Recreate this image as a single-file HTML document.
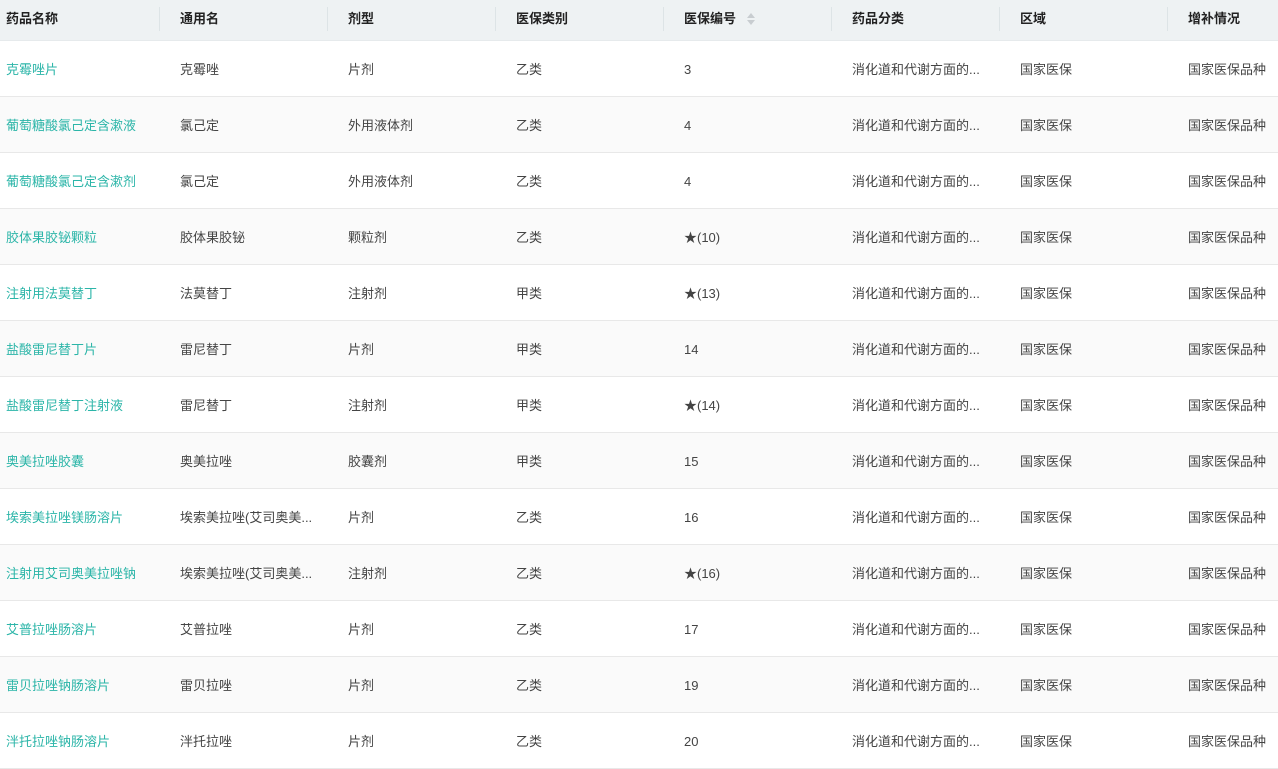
<!DOCTYPE html>
<html><head><meta charset="utf-8"><style>
*{margin:0;padding:0;box-sizing:border-box}
body{width:1278px;height:756px;overflow:hidden;background:#fff;font-family:"Liberation Sans","Noto Sans CJK SC",sans-serif;font-size:13px;color:#333;line-height:18px}
.hd{position:absolute;left:0;top:0;width:1278px;height:41px;background:#eef2f3;border-bottom:1px solid #e6eaec}
.c{position:absolute;white-space:nowrap;height:18px;line-height:18px}
.h{font-weight:bold;color:#222;top:10px}
.sep{position:absolute;top:7px;width:1px;height:24px;background:#dde4e6}
.row{position:absolute;left:0;width:1278px;height:56px;border-bottom:1px solid #e8e8e8}
.row .c{top:20px;color:#444}
.row .l{color:#2bb5a8}
</style></head><body>
<div class="hd">
<span class="c h" style="left:6px">药品名称</span>
<span class="c h" style="left:180px">通用名</span>
<span class="c h" style="left:348px">剂型</span>
<span class="c h" style="left:516px">医保类别</span>
<span class="c h" style="left:684px">医保编号</span>
<svg style="position:absolute;left:746px;top:12px" width="10" height="14"><path d="M1 6 L5 1 L9 6Z M1 8 L5 13 L9 8Z" fill="#c8cdd0"/></svg>
<span class="c h" style="left:852px">药品分类</span>
<span class="c h" style="left:1020px">区域</span>
<span class="c h" style="left:1188px">增补情况</span>
<div class="sep" style="left:159px"></div><div class="sep" style="left:327px"></div><div class="sep" style="left:495px"></div><div class="sep" style="left:663px"></div><div class="sep" style="left:831px"></div><div class="sep" style="left:999px"></div><div class="sep" style="left:1167px"></div>
</div>
<div id="rows"></div>
<script>
var d=[["克霉唑片","克霉唑","片剂","乙类","3"],["葡萄糖酸氯己定含漱液","氯己定","外用液体剂","乙类","4"],["葡萄糖酸氯己定含漱剂","氯己定","外用液体剂","乙类","4"],["胶体果胶铋颗粒","胶体果胶铋","颗粒剂","乙类","★(10)"],["注射用法莫替丁","法莫替丁","注射剂","甲类","★(13)"],["盐酸雷尼替丁片","雷尼替丁","片剂","甲类","14"],["盐酸雷尼替丁注射液","雷尼替丁","注射剂","甲类","★(14)"],["奥美拉唑胶囊","奥美拉唑","胶囊剂","甲类","15"],["埃索美拉唑镁肠溶片","埃索美拉唑(艾司奥美...","片剂","乙类","16"],["注射用艾司奥美拉唑钠","埃索美拉唑(艾司奥美...","注射剂","乙类","★(16)"],["艾普拉唑肠溶片","艾普拉唑","片剂","乙类","17"],["雷贝拉唑钠肠溶片","雷贝拉唑","片剂","乙类","19"],["泮托拉唑钠肠溶片","泮托拉唑","片剂","乙类","20"]];
var h="";d.forEach(function(r,i){h+='<div class="row" style="top:'+(41+56*i)+'px;background:'+(i%2?'#fafafa':'#fff')+'"><span class="c l" style="left:6px">'+r[0]+'</span><span class="c" style="left:180px">'+r[1]+'</span><span class="c" style="left:348px">'+r[2]+'</span><span class="c" style="left:516px">'+r[3]+'</span><span class="c" style="left:684px">'+r[4]+'</span><span class="c" style="left:852px">消化道和代谢方面的...</span><span class="c" style="left:1020px">国家医保</span><span class="c" style="left:1188px">国家医保品种</span></div>'});
document.getElementById("rows").innerHTML=h;
</script>
</body></html>
